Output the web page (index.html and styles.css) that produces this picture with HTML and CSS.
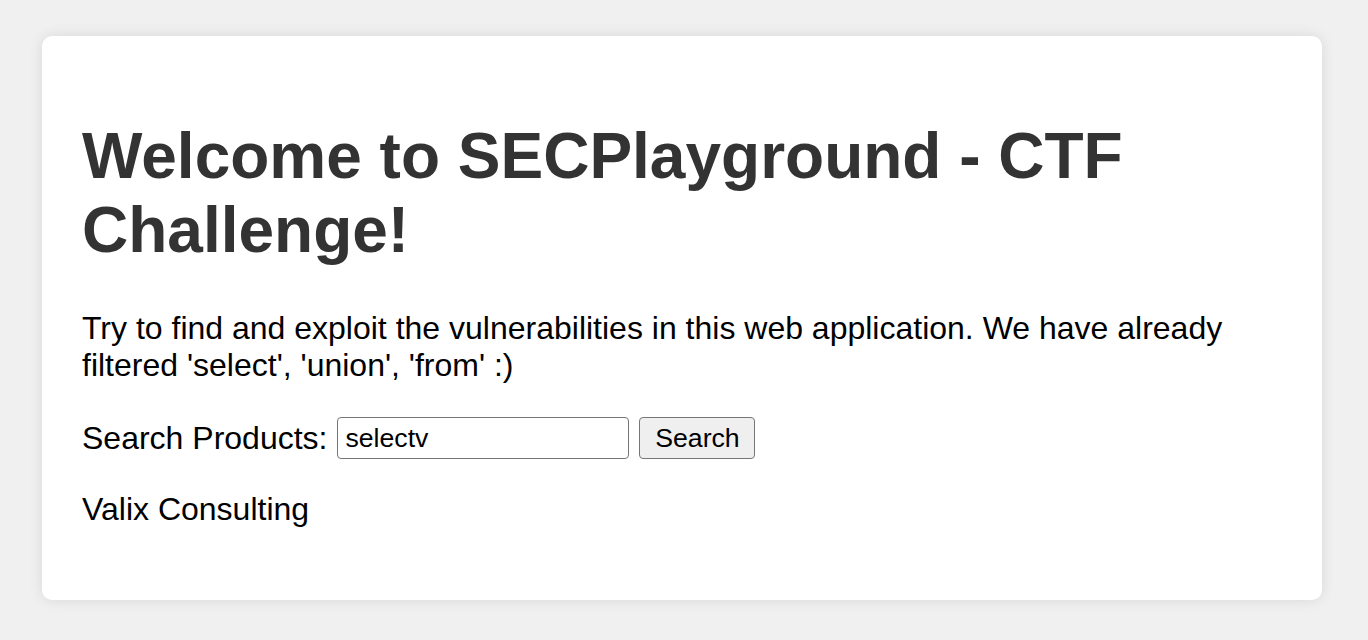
FILE: index.html
```html
<!DOCTYPE html>
<html lang="en">
<head>
<meta charset="utf-8">
<title>SECPlayground - CTF Challenge</title>
<link rel="stylesheet" href="styles.css">
</head>
<body>
<div class="card">
  <h1 class="title">Welcome to SECPlayground - CTF Challenge!</h1>
  <p class="intro">Try to find and exploit the vulnerabilities in this web application. We have already filtered 'select', 'union', 'from' :)</p>
  <form class="search" onsubmit="return false;">
    <label class="search-label" for="q">Search Products:</label>
    <input class="search-input" id="q" type="text" value="selectv">
    <button class="search-btn" type="submit">Search</button>
  </form>
  <p class="footer">Valix Consulting</p>
</div>
</body>
</html>
```

FILE: styles.css
```css
html, body {
  margin: 0;
  padding: 0;
}
body {
  background: #f0f0f0;
  font-family: "Liberation Sans", Arial, Helvetica, sans-serif;
  padding: 36px 46px 40px 42px;
}
.card {
  background: #ffffff;
  border-radius: 10px;
  box-shadow: 0 0 14px rgba(0, 0, 0, 0.1);
  padding: 40px;
}
.title {
  font-size: 64px;
  line-height: 74px;
  font-weight: bold;
  color: #333333;
  margin: 43px 0 43px 0;
}
.intro {
  font-size: 32px;
  line-height: 37px;
  color: #000000;
  margin: 0;
}
.search {
  display: flex;
  align-items: center;
  margin: 33px 0 32px 0;
}
.search-label {
  font-size: 32px;
  line-height: 37px;
  color: #000;
  margin-right: 10px;
}
.search-input {
  box-sizing: border-box;
  width: 292px;
  height: 42px;
  font-family: "Liberation Sans", Arial, sans-serif;
  font-size: 26.67px;
  padding: 0 7px;
  border: 1px solid #767676;
  border-radius: 4px;
  color: #000;
  background: #fff;
  margin: 0 10px 0 0;
}
.search-btn {
  box-sizing: border-box;
  width: 116px;
  height: 42px;
  font-family: "Liberation Sans", Arial, sans-serif;
  font-size: 26.67px;
  padding: 0;
  border: 1px solid #767676;
  border-radius: 4px;
  background: #efefef;
  color: #000;
  margin: 0;
}
.footer {
  font-size: 32px;
  line-height: 37px;
  color: #000;
  margin: 0 0 32px 0;
}
```
